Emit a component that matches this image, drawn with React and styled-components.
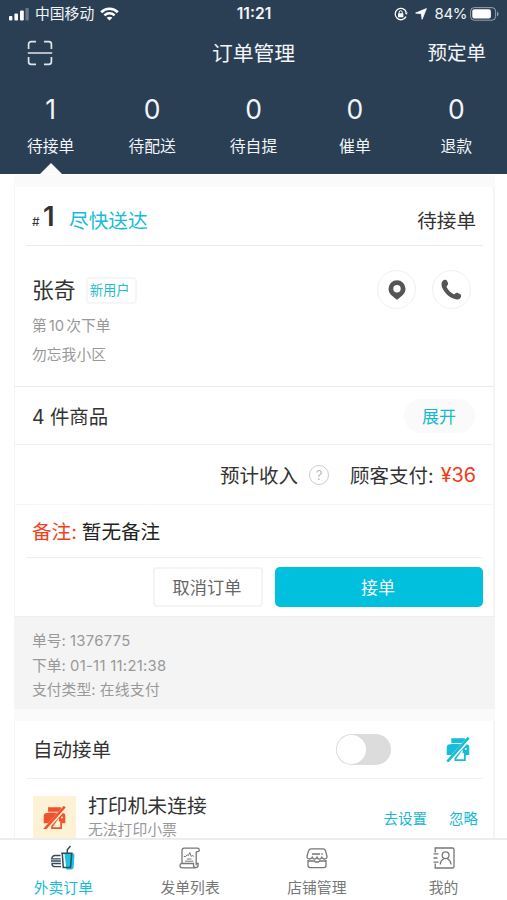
import React, { useState } from "react";
import styled, { createGlobalStyle } from "styled-components";

const tabs = [
  { name: "待接单", count: 1 },
  { name: "待配送", count: 0 },
  { name: "待自提", count: 0 },
  { name: "催单", count: 0 },
  { name: "退款", count: 0 },
];

const order = {
  no: 1,
  customer: "张奇",
  history: ["第", "10", "次下单"],
  address: "勿忘我小区",
  price: "¥36",
};

const orderInfo = [
  { label: "单号:", value: "1376775" },
  { label: "下单:", value: "01-11 11:21:38" },
  { label: "支付类型:", value: "在线支付" },
];

// icons
const SignalIcon = () => (
  <svg width="20" height="13" viewBox="0 0 20 13" fill="#fff">
    <rect x="0" y="8" width="3.4" height="4.5" rx="1" />
    <rect x="5.4" y="5.6" width="3.6" height="6.9" rx="1" />
    <rect x="11" y="2.4" width="3.8" height="10.1" rx="1" />
    <rect x="16.4" y="0" width="3.4" height="12.5" rx="1" opacity="0.3" />
  </svg>
);

const WifiIcon = () => (
  <svg width="19" height="14" viewBox="0 0 19 14" fill="none" stroke="#fff">
    <path d="M1.2 5.2C5.8 .6 13.2.6 17.8 5.2" strokeWidth="2.7" />
    <path d="M4.4 8.4c2.9-2.8 7.3-2.8 10.2 0" strokeWidth="2.5" />
    <path d="M9.5 13.6 6.6 10.8c1.7-1.5 4.1-1.5 5.8 0z" fill="#fff" stroke="none" />
  </svg>
);

const LockIcon = () => (
  <svg width="14" height="14" viewBox="0 0 14 14" fill="none" stroke="#fff">
    <path d="M12.3 5.2A5.7 5.7 0 1 0 12 9.6" strokeWidth="1.3" />
    <path d="M10.6 5.6h3.2l-1.4 2.2z" fill="#fff" stroke="none" />
    <rect x="4" y="6.2" width="5.4" height="4" rx=".5" fill="#fff" stroke="none" />
    <path d="M5.2 6.6V5.2a1.5 1.5 0 0 1 3 0v1.4" strokeWidth="1" />
  </svg>
);

const LocationIcon = () => (
  <svg width="12" height="12" viewBox="0 0 12 12" fill="#fff" stroke="#fff" strokeWidth=".8" strokeLinejoin="round">
    <path d="M11.4.6 7.1 11.3 6.4 5.8.6 5.1z" />
  </svg>
);

const BatteryIcon = () => (
  <svg width="29" height="14" viewBox="0 0 29 14">
    <rect x=".6" y=".6" width="25" height="12.6" rx="3.6" fill="none" stroke="#fff" strokeOpacity=".5" />
    <rect x="2.3" y="2.3" width="18.6" height="9.2" rx="2" fill="#fff" />
    <path d="M27 4.7c2 .7 2 3.9 0 4.6z" fill="#fff" opacity=".5" />
  </svg>
);

const ScanIcon = () => (
  <svg width="26" height="26" viewBox="0 0 26 26" fill="none" stroke="#dfe5ec" strokeWidth="1.7">
    <path d="M1.6 9V4.2a2.6 2.6 0 0 1 2.6-2.6H9M17 1.6h4.8a2.6 2.6 0 0 1 2.6 2.6V9M24.4 17v4.8a2.6 2.6 0 0 1-2.6 2.6H17M9 24.4H4.2a2.6 2.6 0 0 1-2.6-2.6V17M.8 13h24.4" />
  </svg>
);

const PinIcon = () => (
  <svg width="18" height="20" viewBox="0 0 18 20">
    <path
      fill="#555"
      fillRule="evenodd"
      d="M9 .3a8.5 8.5 0 0 1 8.5 8.5c0 2.5-1.1 4.5-2.6 6.1L9.8 19.3a1.2 1.2 0 0 1-1.6 0L3.1 14.9C1.6 13.3.5 11.3.5 8.8A8.5 8.5 0 0 1 9 .3zM9 5a3.7 3.7 0 1 0 0 7.4A3.7 3.7 0 0 0 9 5z"
    />
  </svg>
);

const PhoneIcon = () => (
  <svg width="21" height="21" viewBox="0 0 21 21">
    <path
      fill="#555"
      d="M1.6 2C3 .5 4.9.3 5.8 1.6l1 1.9c.7 1.4.3 2.3-.8 3.2-.6.5-.6 1-.2 1.7 1.6 2.9 3.7 5 6.6 6.6.7.4 1.2.4 1.7-.2.9-1.1 1.8-1.3 3.2-.6l2 1.1c1.3.9 1.1 2.7-.3 4.1-1.3 1.2-3.5 1.3-6 .4C7.7 18 2.9 13.2 1 7.9.2 5.5.4 3.3 1.6 2z"
    />
  </svg>
);

const PrinterOffIcon = ({ color, slash, size = 24 }) => (
  <svg width={size} height={size * 1.04} viewBox="0 0 24 25">
    <path fill={color} d="M5.3 1.3H19v5.9h1.3a3 3 0 0 1 3 3V18H19.8v6H8.5v-6H.7v-7.3a3.4 3.4 0 0 1 3.4-3.4h1.2z" />
    <path stroke={slash} strokeWidth=".9" d="M5.2 6.5h11" />
    <path fill={slash} d="M16.6 12.5v3.8h1.4v5.9H10z" />
    <circle cx="19.8" cy="12" r="1" fill={slash} />
    <path stroke={slash} strokeWidth="4.4" d="M1.8 25.2 23.7.6" />
    <path stroke={color} strokeWidth="2.7" d="M1.3 24.7 22.700.6" />
  </svg>
);

const TakeoutIcon = () => (
  <svg width="26" height="26" viewBox="0 0 26 26" fill="none" stroke="#34495b" strokeWidth="1.3">
    <path d="M14.5 8.8h10l-.9 13.5a2.2 2.2 0 0 1-2.2 2.2h-5z" fill="#16c3e0" stroke="none" />
    <path d="M11.2 8.3h11.5M12.3 8.5l1 14h7.2l1.2-14M17.3 8V4.8l3.2-3.8" strokeWidth="1.5" />
    <path d="M10.5 10.5H5.2c-2 0-3.3 1.3-3.5 3.3h9M10.8 16H1M10.9 18.5H1.4M11 21.7H5c-1.7 0-2.9-1-3.2-2.9" />
  </svg>
);

const ReceiptIcon = () => (
  <svg width="22" height="22" viewBox="0 0 22 22" fill="none" stroke="#777" strokeWidth="1.3">
    <path d="M3 16.5V3.5C3 2 3.8 1.2 5.2 1.2h13.3c2.3 0 2.3 3.5.2 3.5h-1.5M17.2 4.7v13.5M3 16.5h11.5v1.5c0 3.4 4.6 3.4 4.6 0v-1.5h-1.900M3 16.5c-2.7 0-2.7 4.3.2 4.3h13.5" />
    <path d="M4.8 9.5h2l1.4-1.8 1.2 1 1.4-3.2 1.4 3.800 1.5-.8 1.4 1M7.8 12h4.6M6 14.2h8.4" strokeWidth="1" />
  </svg>
);

const ShopIcon = () => (
  <svg width="22" height="21" viewBox="0 0 22 21" fill="none" stroke="#777" strokeWidth="1.3">
    <path d="M5.2.9h11.6c1.7 0 2.3.7 2.7 2L21 8.2c.5 3.4-4.2 3.6-5.2 1.1-1 2.5-4 2.5-4.8 0-.8 2.5-3.8 2.5-4.8 0-1 2.5-5.7 2.3-5.2-1.1l1.5-5.3C2.9 1.6 3.5.9 5.2.9zM6 6h8M15.3 6h1.5" />
    <path d="M2 12v5.6a2 2 0 0 0 2 2h14a2 2 0 0 0 2-2V12M2 13h6.500l1 1h3l1-1H20" />
  </svg>
);

const MineIcon = () => (
  <svg width="22" height="22" viewBox="0 0 22 22" fill="none" stroke="#777" strokeWidth="1.3">
    <path d="M2.2 5.5V1h17.2a1.6 1.6 0 0 1 1.6 1.6v16.8a1.6 1.6 0 0 1-1.6 1.6H2.2v-4.5M.5 6.8h5M.5 11h4M.5 15.2h5" />
    <circle cx="12.6" cy="8.3" r="3.4" />
    <path d="M7.2 17.5c.3-2.8 1.5-4.7 3.6-5.6M14.4 11.9c2.1.9 3.3 2.8 3.6 5.6" />
  </svg>
);

const menus = [
  { name: "外卖订单", icon: <TakeoutIcon /> },
  { name: "发单列表", icon: <ReceiptIcon /> },
  { name: "店铺管理", icon: <ShopIcon /> },
  { name: "我的", icon: <MineIcon /> },
];

const App = () => {
  const [tab, setTab] = useState(0);
  const [menu, setMenu] = useState(0);
  const [auto, setAuto] = useState(false);

  return (
    <>
      <GlobalStyle />
      <Layout>
        <Header>
          <StatusBar>
            <Carrier>
              <SignalIcon />
              <span>中国移动</span>
              <WifiIcon />
            </Carrier>
            <Clock>11:21</Clock>
            <Power>
              <LockIcon />
              <LocationIcon />
              <span>84%</span>
              <BatteryIcon />
            </Power>
          </StatusBar>
          <TitleBar>
            <ScanIcon />
            <Title>订单管理</Title>
            <Reserve>预定单</Reserve>
          </TitleBar>
          <Tabs>
            {tabs.map((item, i) => (
              <Tab key={item.name} $active={tab === i} onClick={() => setTab(i)}>
                <strong>{item.count}</strong>
                <span>{item.name}</span>
              </Tab>
            ))}
          </Tabs>
        </Header>

        <Content>
          <Card>
            <OrderHead>
              <Hash>#</Hash>
              <OrderNo>{order.no}</OrderNo>
              <Delivery>尽快送达</Delivery>
              <Status>待接单</Status>
            </OrderHead>
            <Customer>
              <div>
                <NameRow>
                  <Name>{order.customer}</Name>
                  <Tag>新用户</Tag>
                </NameRow>
                <Gray>
                  {order.history[0]}
                  <Num>{order.history[1]}</Num>
                  {order.history[2]}
                </Gray>
                <Gray>{order.address}</Gray>
              </div>
              <Contacts>
                <RoundButton>
                  <PinIcon />
                </RoundButton>
                <RoundButton>
                  <PhoneIcon />
                </RoundButton>
              </Contacts>
            </Customer>
            <Goods>
              <span>4 件商品</span>
              <Expand>展开</Expand>
            </Goods>
            <Income>
              <span>预计收入</span>
              <Help>?</Help>
              <span>顾客支付:</span>
              <Price>{order.price}</Price>
            </Income>
            <Note>
              <b>备注:</b>
              <span>暂无备注</span>
            </Note>
            <Actions>
              <CancelButton>取消订单</CancelButton>
              <AcceptButton>接单</AcceptButton>
            </Actions>
            <Info>
              {orderInfo.map((item) => (
                <p key={item.label}>
                  {item.label} <span>{item.value}</span>
                </p>
              ))}
            </Info>
          </Card>

          <Card>
            <AutoRow>
              <span>自动接单</span>
              <Toggle $on={auto} onClick={() => setAuto(!auto)} />
              <PrinterOffIcon color="#16bcd8" slash="#fff" />
            </AutoRow>
            <Printer>
              <PrinterBox>
                <PrinterOffIcon color="#f0532d" slash="#fdf2d6" size={23} />
              </PrinterBox>
              <PrinterText>
                <strong>打印机未连接</strong>
                <span>无法打印小票</span>
              </PrinterText>
              <PrinterLinks>
                <span>去设置</span>
                <span>忽略</span>
              </PrinterLinks>
            </Printer>
          </Card>
        </Content>

        <BottomMenu>
          {menus.map((item, i) => (
            <MenuItem key={item.name} $active={menu === i} onClick={() => setMenu(i)}>
              <MenuIcon>{item.icon}</MenuIcon>
              <span>{item.name}</span>
            </MenuItem>
          ))}
        </BottomMenu>
      </Layout>
    </>
  );
};

export default App;

const GlobalStyle = createGlobalStyle`
  * {
    box-sizing: border-box;
    margin: 0;
    padding: 0;
  }
  body {
    background-color: #fff;
    font-family: Inter, "Noto Sans CJK SC", sans-serif;
    color: #333;
    overflow: hidden;
  }
  button {
    font-family: inherit;
    background: none;
    border: none;
  }
  svg {
    display: block;
    flex-shrink: 0;
  }
`;

const Layout = styled.div`
  display: flex;
  flex-direction: column;
  width: 507px;
  height: 900px;
  overflow: hidden;
  white-space: nowrap;
`;

const Header = styled.header`
  height: 174px;
  flex-shrink: 0;
  background-color: #2b3f54;
  color: #f2f5f8;
`;

const StatusBar = styled.div`
  display: grid;
  grid-template-columns: 1fr auto 1fr;
  align-items: center;
  height: 28px;
  padding: 0 8px 0 9px;
  line-height: 28px;
`;

const Carrier = styled.div`
  display: flex;
  align-items: center;
  gap: 6px;
  font-size: 14.8px;
`;

const Clock = styled.div`
  font-size: 15.6px;
  font-weight: 600;
`;

const Power = styled.div`
  display: flex;
  align-items: center;
  justify-content: flex-end;
  font-size: 15px;
  letter-spacing: -0.4px;
  svg:nth-child(2) {
    margin: 0 8px 0 7px;
  }
  span {
    margin-right: 3px;
  }
`;

const TitleBar = styled.div`
  display: grid;
  grid-template-columns: 1fr auto 1fr;
  align-items: center;
  height: 49px;
  padding: 0 21px 0 27px;
  line-height: 47px;
`;

const Title = styled.h1`
  font-size: 20.8px;
  font-weight: 400;
  padding-top: 1px;
  margin-right: 6px;
`;

const Reserve = styled.span`
  font-size: 19.5px;
  padding-top: 1px;
  text-align: right;
`;

const Tabs = styled.div`
  display: grid;
  grid-template-columns: repeat(5, 1fr);
  height: 97px;
`;

const Tab = styled.div`
  position: relative;
  display: flex;
  flex-direction: column;
  align-items: center;
  padding-top: 14px;
  strong {
    font-size: 26.5px;
    font-weight: 400;
    line-height: 37px;
  }
  span {
    margin-top: 7px;
    font-size: 15.8px;
    line-height: 24px;
  }
  &::after {
    content: "";
    display: ${(props) => (props.$active ? "block" : "none")};
    position: absolute;
    bottom: 0;
    border: 11px solid transparent;
    border-top: none;
    border-bottom-color: #fafafa;
  }
`;

const Content = styled.main`
  flex: 1;
  min-height: 0;
  overflow: hidden;
  display: flex;
  flex-direction: column;
  gap: 12px;
  margin: 1px 12px 0 14px;
  padding-top: 12px;
  background-color: #fafafa;
`;

const Card = styled.section`
  flex-shrink: 0;
  background-color: #fff;
  border-left: 1px solid #f5f5f5;
  border-right: 2px solid #f5f5f5;
`;

const OrderHead = styled.div`
  display: flex;
  align-items: baseline;
  height: 59px;
  margin: 0 10px 0 11px;
  padding: 0 7px 0 6px;
  border-bottom: 1px solid #ebebeb;
  line-height: 69px;
`;

const Hash = styled.span`
  font-size: 12px;
  font-weight: 400;
  width: 11px;
  line-height: 50px;
  transform: translateY(-2px);
`;

const OrderNo = styled.span`
  font-size: 27.5px;
  font-weight: 600;
  width: 26px;
  line-height: 50px;
  transform: translateY(-2px);
`;

const Delivery = styled.span`
  font-size: 19.7px;
  color: #17bcd8;
`;

const Status = styled.span`
  margin-left: auto;
  font-size: 19.6px;
`;

const Customer = styled.div`
  display: flex;
  justify-content: space-between;
  height: 141px;
  padding: 24px 22px 0 17px;
  border-bottom: 1px solid #ebebeb;
`;

const NameRow = styled.div`
  display: flex;
  align-items: center;
  height: 40px;
  margin-bottom: 2px;
`;

const Name = styled.span`
  font-size: 21.8px;
  line-height: 36px;
`;

const Tag = styled.span`
  margin-left: 10px;
  width: 51px;
  height: 27px;
  border: 2px solid #f6f6f6;
  border-radius: 4px;
  font-size: 13.3px;
  line-height: 22px;
  padding-right: 3px;
  text-align: center;
  color: #22bcc8;
`;

const Gray = styled.p`
  font-size: 14.8px;
  line-height: 29px;
  color: #999;
`;

const Num = styled.span`
  margin: 0 2px;
`;

const Contacts = styled.div`
  display: flex;
  gap: 16px;
`;

const RoundButton = styled.button`
  display: flex;
  align-items: center;
  justify-content: center;
  width: 39px;
  height: 39px;
  border: 1.5px solid #f0f0f0;
  border-radius: 50%;
`;

const Goods = styled.div`
  display: flex;
  align-items: center;
  justify-content: space-between;
  height: 58px;
  padding: 0 18px 0 17px;
  border-bottom: 1px solid #efefef;
  font-size: 19.4px;
`;

const Expand = styled.button`
  width: 71px;
  height: 34px;
  border-radius: 17px;
  background-color: #fafafa;
  font-size: 17px;
  padding-right: 1px;
  color: #17b8d2;
`;

const Income = styled.div`
  display: flex;
  align-items: center;
  justify-content: flex-end;
  height: 60px;
  padding-right: 17px;
  border-bottom: 1px solid #f5f5f5;
  font-size: 19.5px;
`;

const Help = styled.span`
  display: flex;
  align-items: center;
  justify-content: center;
  width: 20px;
  height: 20px;
  margin: 0 21px 0 11px;
  border: 1.5px solid #ccc;
  border-radius: 50%;
  font-size: 13px;
  color: #bbb;
`;

const Price = styled.span`
  margin-left: 7px;
  font-size: 19.8px;
  color: #f23a14;
`;

const Note = styled.div`
  display: flex;
  align-items: center;
  height: 53px;
  margin: 0 10px 0 11px;
  padding: 0 0 2px 6px;
  border-bottom: 1px solid #efefef;
  font-size: 19.6px;
  color: #222;
  b {
    font-weight: 400;
    color: #f0401c;
    margin-right: 5px;
  }
`;

const Actions = styled.div`
  display: flex;
  justify-content: flex-end;
  gap: 12px;
  height: 58px;
  padding: 9px 10px 0 0;
`;

const CancelButton = styled.button`
  width: 110px;
  height: 40px;
  border: 2px solid #f4f4f4;
  border-radius: 4px;
  font-size: 17.2px;
  padding: 0 2px 2px 0;
  color: #666;
`;

const AcceptButton = styled.button`
  width: 208px;
  height: 40px;
  border-radius: 5px;
  background-color: #00c0de;
  font-size: 17px;
  padding: 0 2px 2px 0;
  color: #f4fdff;
`;

const Info = styled.div`
  height: 93px;
  padding: 12px 18px 0;
  margin: 0 -2px 0 -1px;
  background-color: #f4f4f4;
  border-top: 1px solid #eee;
  p {
    font-size: 14.8px;
    line-height: 24.5px;
    color: #999;
  }
  span {
    letter-spacing: 0.3px;
  }
`;

const AutoRow = styled.div`
  display: flex;
  align-items: center;
  height: 58px;
  margin: 0 10px 0 11px;
  padding: 0 13px 0 7px;
  border-bottom: 1px solid #f1f1f1;
  font-size: 19.5px;
  > span {
    padding-bottom: 2px;
  }
`;

const Toggle = styled.button`
  display: flex;
  justify-content: ${(props) => (props.$on ? "flex-end" : "flex-start")};
  width: 55px;
  height: 31px;
  margin: 0 55px 0 auto;
  padding: 1px;
  border-radius: 16px;
  background-color: ${(props) => (props.$on ? "#00c0de" : "#dcdcdc")};
  &::before {
    content: "";
    width: 29px;
    height: 29px;
    border-radius: 50%;
    background-color: #fff;
  }
`;

const Printer = styled.div`
  display: flex;
  height: 90px;
  padding: 17px 15px 0 18px;
`;

const PrinterBox = styled.div`
  display: flex;
  align-items: center;
  justify-content: center;
  width: 43px;
  height: 43px;
  background-color: #fdf2d6;
`;

const PrinterText = styled.div`
  display: flex;
  flex-direction: column;
  margin: -4px 0 0 12px;
  strong {
    font-size: 19.8px;
    font-weight: 400;
    line-height: 28px;
  }
  span {
    font-size: 14.8px;
    line-height: 21px;
    color: #999;
  }
`;

const PrinterLinks = styled.div`
  display: flex;
  gap: 22px;
  margin-left: auto;
  font-size: 14.5px;
  line-height: 45px;
  color: #17b8d2;
`;

const BottomMenu = styled.nav`
  display: grid;
  grid-template-columns: repeat(4, 1fr);
  flex-shrink: 0;
  height: 62px;
  border-top: 2px solid #ececec;
  background-color: #fff;
`;

const MenuItem = styled.div`
  display: flex;
  flex-direction: column;
  align-items: center;
  font-size: 14.8px;
  line-height: 25px;
  color: ${(props) => (props.$active ? "#17bcd8" : "#777")};
`;

const MenuIcon = styled.div`
  display: flex;
  align-items: center;
  height: 36px;
`;
